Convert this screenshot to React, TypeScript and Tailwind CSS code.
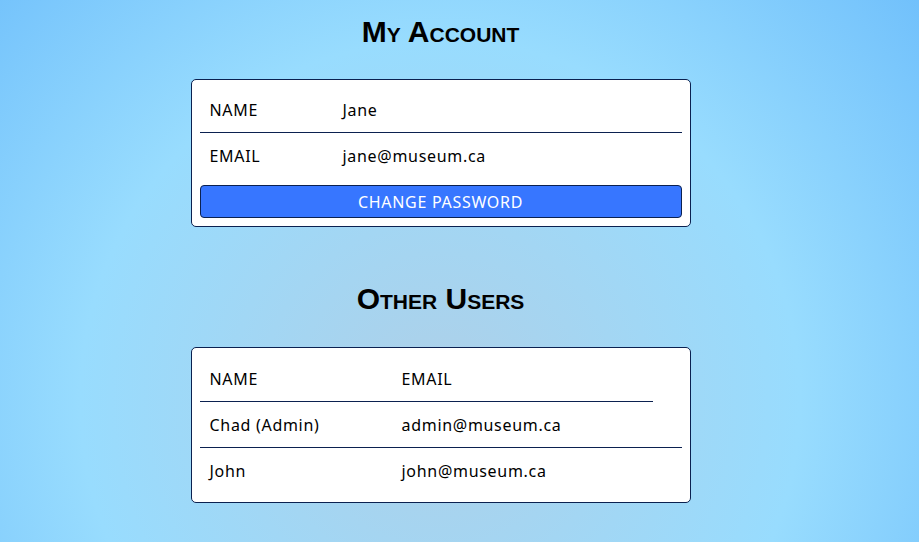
const me = { name: "Jane", email: "jane@museum.ca" };

const others = [
  { name: "Chad (Admin)", email: "admin@museum.ca" },
  { name: "John", email: "john@museum.ca" },
];

function Heading({ children }: { children: string }) {
  return (
    <h1 className="h-10 text-[30px] leading-10 tracking-normal font-bold text-black [font-variant:small-caps] [font-family:'Liberation_Sans',sans-serif]">
      {children}
    </h1>
  );
}

export default function App() {
  return (
    <div className="min-h-[542px] w-full bg-[radial-gradient(circle_at_440px_400px,#aed0e8_0px,#98dcfe_360px,#6cbdfb_660px)] text-[16px] tracking-[0.7px] text-black [font-family:'Noto_Sans',sans-serif]">
      <div className="w-[881px] flex flex-col items-center pt-[12px] pb-10">
        <Heading>My Account</Heading>

        <div className="mt-[27px] w-[500px] bg-white border border-[#0b2150] rounded-[5px] p-2">
          <div className="flex items-center h-[45px] border-b border-[#0b2150]">
            <div className="w-[133px] pl-[10px]">NAME</div>
            <div className="pl-[10px]">{me.name}</div>
          </div>
          <div className="flex items-center h-[46px]">
            <div className="w-[133px] pl-[10px]">EMAIL</div>
            <div className="pl-[10px]">{me.email}</div>
          </div>
          <button className="mt-[6px] w-full h-[33px] bg-[#3776ff] text-white border border-[#0b2150] rounded-[4px]">
            CHANGE PASSWORD
          </button>
        </div>

        <div className="mt-[52px]">
          <Heading>Other Users</Heading>
        </div>

        <div className="mt-[28px] w-[500px] bg-white border border-[#0b2150] rounded-[5px] p-2">
          <div className="flex items-center h-[46px] w-[453px] border-b border-[#0b2150]">
            <div className="w-[192px] pl-[10px]">NAME</div>
            <div className="pl-[10px]">EMAIL</div>
          </div>
          {others.map((u, i) => (
            <div
              key={u.email}
              className={`flex items-center h-[46px] ${i < others.length - 1 ? "border-b border-[#0b2150]" : ""}`}
            >
              <div className="w-[192px] pl-[10px]">{u.name}</div>
              <div className="pl-[10px]">{u.email}</div>
            </div>
          ))}
        </div>
      </div>
    </div>
  );
}
